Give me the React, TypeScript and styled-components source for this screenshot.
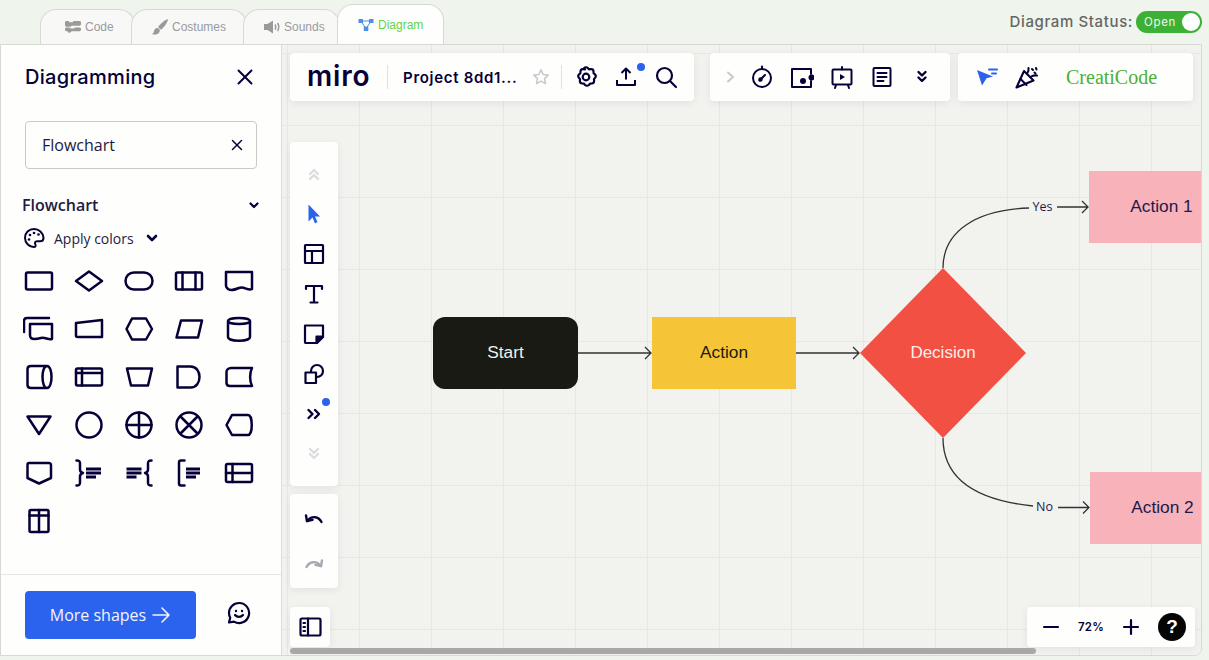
import React from "react";
import styled, { createGlobalStyle } from "styled-components";
import { X } from "lucide-react";

const INK = "#050038";
const BLUE = "#2b62ee";

const Global = createGlobalStyle`
  html, body { margin: 0; padding: 0; width: 1209px; height: 660px; overflow: hidden; background: #eff5ec; }
  * { box-sizing: border-box; }
`;
const Page = styled.div`
  width: 1209px; height: 660px; display: flex; flex-direction: column; background: #eff5ec;
  font-family: "Open Sans", "Noto Sans", sans-serif; color: ${INK};
`;
const TopRow = styled.div`display: flex; align-items: flex-end; height: 44px; padding-left: 40px; flex: none;`;
const Tab = styled.div<{ $active?: boolean; $pl: number; $width: number }>`
  width: ${p => p.$width}px; height: ${p => (p.$active ? 40 : 35)}px;
  margin-left: ${p => (p.$active ? -3 : -4)}px;
  &:first-child { margin-left: 0; }
  padding-left: ${p => p.$pl}px; display: flex; align-items: center; gap: 4px;
  padding-top: ${p => (p.$active ? 1 : 0)}px;
  background: ${p => (p.$active ? "#fefefd" : "#f8f9f6")}; border: 1px solid #d7d9d4; border-bottom: none;
  border-radius: 16px 16px 0 0;
  font: 12px "Liberation Sans", Arial, sans-serif; color: ${p => (p.$active ? "#5fd544" : "#9a9aa0")};
`;
const StatusWrap = styled.div`margin-left: auto; align-self: flex-start; margin-top: 11px; padding-right: 7px; display: flex; align-items: center; gap: 3px;`;
const StatusLabel = styled.span`font: 500 15px Inter, sans-serif; letter-spacing: .62px; color: #666; line-height: 22px;`;
const Toggle = styled.div`
  width: 66px; height: 22px; border-radius: 11px; background: #3db135; color: #eef8ec; position: relative;
  font: 400 11.5px Inter, sans-serif; letter-spacing: .65px; line-height: 22px; padding-left: 8px;
`;
const Knob = styled.span`position: absolute; right: 2px; top: 2px; width: 18px; height: 18px; border-radius: 50%; background: #fff;`;

const Main = styled.div`
  display: flex; width: 1202px; height: 612px; flex: none; border: 1px solid #d7d9d4; border-radius: 0 0 8px 0; overflow: hidden;
`;
const Sidebar = styled.aside`width: 281px; flex: none; background: #fefefc; display: flex; flex-direction: column; border-right: 1px solid #dcdcd8;`;
const SideHead = styled.div`height: 64px; flex: none; display: flex; align-items: center; justify-content: space-between; padding: 0 23px 0 24px;`;
const SideTitle = styled.h1`margin: 0; font: 500 20px Inter, sans-serif; letter-spacing: .3px; color: ${INK};`;
const SearchBox = styled.div`
  margin: 12px 0 0 24px; width: 232px; height: 48px; flex: none; border: 1px solid #c9c9cc; border-radius: 4px;
  display: flex; align-items: center; justify-content: space-between; padding: 0 10px 0 16px; font-size: 16px; color: #1a1a40;
`;
const SectionRow = styled.div`
  margin: 24px 22px 0 21px; height: 24px; flex: none; display: flex; align-items: center; justify-content: space-between;
  font-weight: 600; font-size: 16px; color: #1f1b44;
`;
const ApplyRow = styled.div`margin: 9px 0 0 22px; height: 24px; flex: none; display: flex; align-items: center; font-size: 14px; color: #1f1b44;`;
const ApplyText = styled.span`margin: 0 11px 0 9px;`;
const ShapeGrid = styled.div`margin: 7px 0 0 13px; display: grid; grid-template-columns: repeat(5, 50px); grid-auto-rows: 48px; flex: none;`;
const ShapeCell = styled.div`display: flex; align-items: center; justify-content: center;`;
const SideFoot = styled.div`
  margin-top: auto; height: 81px; flex: none; border-top: 1px solid #e6e7e3; display: flex; align-items: center; padding-left: 24px;
`;
const MoreBtn = styled.div`
  width: 171px; height: 48px; background: ${BLUE}; color: #f2f5ff; border-radius: 4px; font-size: 16px;
  display: flex; align-items: center; justify-content: center; gap: 5px;
`;
const Smile = styled.div`margin: -4px 0 0 31px; display: flex;`;

const Canvas = styled.main`
  position: relative; flex: 1; overflow: hidden; background-color: #f2f3ef;
  background-image: linear-gradient(#e7e8e4 1px, transparent 1px), linear-gradient(90deg, #e7e8e4 1px, transparent 1px);
  background-size: 72px 72px; background-position: 5px 8px;
`;
const Wires = styled.svg`position: absolute; left: 0; top: 0; width: 920px; height: 611px;`;
const Node = styled.div<{ $x: number; $y: number; $w: number; $bg: string; $fg: string; $r?: number }>`
  position: absolute; left: ${p => p.$x - 282}px; top: ${p => p.$y - 45}px; width: ${p => p.$w}px; height: 72px;
  background: ${p => p.$bg}; color: ${p => p.$fg}; border-radius: ${p => p.$r ?? 0}px;
  display: flex; align-items: center; justify-content: center; font: 17.3px "Liberation Sans", Arial, sans-serif; padding-bottom: 1px;
`;
const DecisionText = styled.div`
  position: absolute; left: ${860 - 282}px; top: ${268 - 45}px; width: 166px; height: 170px; display: flex; align-items: center; justify-content: center;
  font: 17px "Liberation Sans", Arial, sans-serif; color: #fbeeea;
`;
const EdgeLabel = styled.span<{ $x: number; $y: number }>`
  position: absolute; left: ${p => p.$x - 282}px; top: ${p => p.$y - 45}px; transform: translate(-50%, -50%);
  font-size: 12.5px; color: #1d1a4a; line-height: 16px;
`;
const TopBars = styled.div`position: absolute; left: 8px; top: 8px; display: flex; gap: 16px;`;
const Panel = styled.div`background: #fefefc; border-radius: 4px; box-shadow: 0 2px 8px rgba(5, 0, 56, .07);`;
const BarPanel = styled(Panel)<{ $w: number; $ml?: number; $pl: number }>`
  width: ${p => p.$w}px; height: 48px; display: flex; align-items: center; padding-left: ${p => p.$pl}px; margin-left: ${p => p.$ml ?? 0}px;
`;
const Logo = styled.span`width: 62px; font: 600 28px Inter, sans-serif; letter-spacing: .8px; color: ${INK}; line-height: 48px; padding-bottom: 3px;`;
const Divider = styled.span<{ $ml: number }>`width: 1px; height: 24px; background: #e1e0e7; margin-left: ${p => p.$ml}px; flex: none;`;
const ProjectName = styled.span`width: 114px; margin-left: 15px; font: 600 15px Inter, sans-serif; letter-spacing: .7px; color: ${INK}; white-space: nowrap; flex: none;`;
const StarSlot = styled.span`width: 24px; margin-left: 12px; display: flex; justify-content: center; flex: none;`;
const Btn = styled.div<{ $w?: number; $h?: number; $ml?: number; $mr?: number }>`
  position: relative; width: ${p => p.$w ?? 40}px; height: ${p => p.$h ?? 40}px; margin-left: ${p => p.$ml ?? 0}px; margin-right: ${p => p.$mr ?? 0}px; flex: none;
  display: flex; align-items: center; justify-content: center;
`;
const Dot = styled.span<{ $x: number; $y: number }>`position: absolute; left: ${p => p.$x}px; top: ${p => p.$y}px; width: 8px; height: 8px; border-radius: 50%; background: ${BLUE};`;
const Brand = styled.span`margin-left: 19px; font: 20px "Liberation Serif", "Times New Roman", serif; color: #4cb035;`;
const LeftColumn = styled.div`position: absolute; left: 8px; top: 97px; display: flex; flex-direction: column; gap: 8px; width: 48px; align-items: flex-start;`;
const ToolPanel = styled(Panel)`width: 48px; padding: 14px 4px; display: flex; flex-direction: column;`;
const UndoPanel = styled(Panel)`width: 48px; padding: 2px 4px 2px; display: flex; flex-direction: column; height: 94px;`;
const PagesPanel = styled(Panel)`width: 40px; height: 40px; margin-top: 11px; display: flex; align-items: center; justify-content: center;`;
const ZoomPanel = styled(Panel)`position: absolute; left: ${1027 - 282}px; top: ${607 - 45}px; width: 168px; height: 40px; display: flex; align-items: center; padding-left: 4px;`;
const ZoomValue = styled.span`width: 40px; text-align: center; font: 600 11.5px Inter, sans-serif; letter-spacing: .2px; color: ${INK};`;
const Help = styled.div`
  width: 28px; height: 28px; border-radius: 50%; background: #050505; color: #fff; margin-left: 7px;
  display: flex; align-items: center; justify-content: center; font: 700 19px "Liberation Sans", Arial, sans-serif;
`;
const Scrollbar = styled.div`position: absolute; left: 8px; top: ${648 - 45}px; width: 746px; height: 6px; border-radius: 3px; background: #a8a9a6;`;

type IP = { size?: number; children: React.ReactNode; color?: string; w?: number };
const I = ({ size = 24, children, color = INK, w = 2 }: IP) => (
  <svg width={size} height={size} viewBox={`0 0 ${size} ${size}`} fill="none" stroke={color} strokeWidth={w} strokeLinecap="round" strokeLinejoin="round">{children}</svg>
);
const S = ({ children }: { children: React.ReactNode }) => <I size={32} w={2.5}>{children}</I>;
const Chevs = ({ up, color }: { up?: boolean; color: string }) => (
  <I color={color} w={2.4}>
    <path d={up ? "M8 11l4-4 4 4M8 16l4-4 4 4" : "M8 8l4 4 4-4M8 13l4 4 4-4"} />
  </I>
);

const shapes: React.ReactNode[] = [
  <S><rect x="3" y="7.500" width="26" height="17" rx="1.500" /></S>,
  <S><path d="M3 16 16 6.500 29 16 16 25.500Z" /></S>,
  <S><rect x="2.500" y="7.500" width="27" height="17" rx="8.500" /></S>,
  <S><rect x="3" y="7.500" width="26" height="17" rx="1.500" /><path d="M9.500 7.500v17M22.500 7.500v17" /></S>,
  <S><path d="M3 7h26v17c-4 2-8-3-13-1s-8 3-11 1c-1-1-2-2-2-3Z" /></S>,
  <S><path d="M7 11h22v15c-4 1-7-2-11-1s-8 2-10 0c-1-1-1-2-1-3ZM1 19V8c0-2 1-3 3-3h22" /></S>,
  <S><path d="M3 10l26-3v17H4.500A1.500 1.500 0 0 1 3 22.500Z" /></S>,
  <S><path d="M9 5.500h14L29 16 23 26.500H9L3.500 16Z" /></S>,
  <S><path d="M8 7.500h21L25 24.500H3.500Z" /></S>,
  <S><path d="M5 8v16c0 5 22 5 22 0V8c0-4-22-4-22 0ZM5 8c0 4 22 4 22 0" /></S>,
  <S><path d="M8 5h16c6 0 6 22 0 22H8c-2 0-3.500-1-3.500-3V8c0-2 1.500-3 3.500-3ZM24 5c-6 0-6 22 0 22" /></S>,
  <S><rect x="3" y="7.500" width="26" height="17" rx="1.500" /><path d="M3 12h26M9 7.500v17" /></S>,
  <S><path d="M4 7.500h25L25 24.500H8Z" /></S>,
  <S><path d="M4.500 5.500h13c12 0 12 21 0 21h-13Z" /></S>,
  <S><path d="M8 7h21c-2.500 5-2.500 13 0 18H7c-2 0-3.500-1-3.500-3V11c0-2 2-4 4.500-4Z" /></S>,
  <S><path d="M4.500 7.500h23L16 25Z" /></S>,
  <S><circle cx="16" cy="16" r="12.500" /></S>,
  <S><circle cx="16" cy="16" r="12.500" /><path d="M16 3.500v25M3.500 16h25" /></S>,
  <S><circle cx="16" cy="16" r="12.500" /><path d="M7.500 7.500l17 17M24.500 7.500l-17 17" /></S>,
  <S><path d="M9 6h16c5 0 5 20 0 20H9L3.500 16Z" /></S>,
  <S><path d="M6 6h20c1 0 2 1 2 2v13L16 26.500 4.500 21V8c0-1 .500-2 1.500-2Z" /></S>,
  <S><path d="M3.500 3.500c3 0 3.500.500 3.500 3v6c0 2 1 3 3 3.500-2 .500-3 1.500-3 3.500v6c0 2.500-.500 3-3.500 3" /><path d="M13 12h15M13 16h15M13 20h10" strokeWidth="2.800" strokeLinecap="butt" /></S>,
  <S><path d="M28.500 3.500c-3 0-3.500.500-3.500 3v6c0 2-1 3-3 3.500 2 .500 3 1.500 3 3.500v6c0 2.500.500 3 3.500 3" /><path d="M3.500 12h15M3.500 16h15M3.500 20h10" strokeWidth="2.800" strokeLinecap="butt" /></S>,
  <S><path d="M11.500 3.500H8c-1.500 0-2 .500-2 2v21c0 1.500.500 2 2 2h3.500" /><path d="M13 12h14M13 16h14M13 20h10" strokeWidth="2.800" strokeLinecap="butt" /></S>,
  <S><rect x="3" y="7" width="26" height="18" rx="1.500" /><path d="M3 16h26M9.500 7v18" /></S>,
  <S><rect x="6.500" y="5" width="19" height="22" rx="1.500" /><path d="M6.500 10.500h19M16 5v22" /></S>,
];

export default function App() {
  return (
    <Page>
      <Global />
      <TopRow>
        <Tab $pl={24} $width={95}>
          <svg width="16" height="12" viewBox="0 0 16 12" fill="#9a9a9a"><path d="M0 1 1 0h2.500l1 1.200h3L8.500 0H15l1 1v2.500l-1 1.200H6.500l-1 1H1L0 4.500ZM0 7.500l1-1h3.500l1 1h3.500l1-1H15l1 1V9l-1 1.200H6.500l-1.500 1.500H3.500L2.500 10.200H1L0 9Z" /></svg>
          Code
        </Tab>
        <Tab $pl={20} $width={116}>
          <svg width="16" height="16" viewBox="0 0 16 16" fill="#9a9a9a"><path d="M15.800.3c.6 2-3.500 8-6.800 10.500L6 8C8.500 4.800 13.500.2 15.800.3ZM5 9c1.800 0 3 1.300 2.800 2.900C7.400 14.800 2.800 16.500 0 15c2-1 1.600-2.300 2.200-3.600C2.800 10 3.700 9 5 9Z" /></svg>
          Costumes
        </Tab>
        <Tab $pl={20} $width={97}>
          <svg width="16" height="14" viewBox="0 0 16 14" fill="#9a9a9a"><path d="M0 4h3.500L9 .500v13L3.500 10H0Z" /><path d="M11 4.500c1 1.200 1 3.800 0 5M13.500 3c1.600 2.200 1.600 5.800 0 8" stroke="#9a9a9a" strokeWidth="1.600" fill="none" /></svg>
          Sounds
        </Tab>
        <Tab $active $pl={20} $width={107}>
          <svg width="16" height="14" viewBox="0 0 16 14"><path d="M3 3h10L8 11Z" fill="none" stroke="#4b8fe8" strokeWidth="1" /><rect x="0.500" y="1" width="4.500" height="4" fill="#4b8fe8" /><rect x="11" y="1" width="4.500" height="4" fill="#4b8fe8" /><rect x="5.800" y="8.500" width="4.500" height="4.500" fill="#4b8fe8" /></svg>
          Diagram
        </Tab>
        <StatusWrap>
          <StatusLabel>Diagram Status:</StatusLabel>
          <Toggle>Open<Knob /></Toggle>
        </StatusWrap>
      </TopRow>
      <Main>
        <Sidebar>
          <SideHead>
            <SideTitle>Diagramming</SideTitle>
            <X size={26} strokeWidth={1.8} color={INK} />
          </SideHead>
          <SearchBox>Flowchart<X size={18} strokeWidth={2} color={INK} /></SearchBox>
          <SectionRow>
            Flowchart
            <I size={10} w={2.200}><path d="M1.500 3.500 5 7l3.500-3.500" /></I>
          </SectionRow>
          <ApplyRow>
            <I size={22} w={2}>
              <path d="M11 2C5.800 2 2 5.800 2 10.800c0 5 4 9.200 8.600 9.200 2.200 0 2.400-1.500 1.700-2.800-.8-1.400-.2-3 1.700-3h3.200c2 0 3.300-1.300 3.300-3.500C20 5.800 16 2 11 2Z" />
              <circle cx="7" cy="8" r="1.300" fill={INK} stroke="none" />
              <circle cx="11" cy="6" r="1.300" fill={INK} stroke="none" />
              <circle cx="15.500" cy="7.500" r="1.300" fill={INK} stroke="none" />
              <circle cx="6" cy="12.500" r="1.300" fill={INK} stroke="none" />
            </I>
            <ApplyText>Apply colors</ApplyText>
            <I size={14} w={2.600}><path d="M3 5l4 4 4-4" /></I>
          </ApplyRow>
          <ShapeGrid>
            {shapes.map((s, i) => <ShapeCell key={i}>{s}</ShapeCell>)}
          </ShapeGrid>
          <SideFoot>
            <MoreBtn>
              More shapes
              <I size={20} color="#f2f5ff" w={1.600}><path d="M2 10h16M11 3l7 7-7 7" /></I>
            </MoreBtn>
            <Smile>
              <I w={2.200}>
                <path d="M12 2a10 10 0 0 0-10 10c0 2 .5 3.500 1.200 4.800L2 21.500l5-.9A10 10 0 1 0 12 2Z" />
                <circle cx="9" cy="10" r="1.200" fill={INK} stroke="none" />
                <circle cx="15" cy="10" r="1.200" fill={INK} stroke="none" />
                <path d="M8 14c2 2.500 6 2.500 8 0" />
              </I>
            </Smile>
          </SideFoot>
        </Sidebar>
        <Canvas>
          <Wires viewBox="282 45 920 611" fill="none" stroke="#333" strokeWidth="1.300">
            <path d="M578 353H651M645 347l6 6-6 6" />
            <path d="M796 353H859M853 347l6 6-6 6" />
            <path d="M943 268C943 232 975 210 1029 208" />
            <path d="M1057 207H1088M1082 201l6 6-6 6" />
            <path d="M943 438C943 478 975 500 1033 506" />
            <path d="M1058 507.500H1089M1083 501.500l6 6-6 6" />
            <path d="M943 268L1026 353 943 438 860 353Z" fill="#f25042" stroke="none" />
          </Wires>
          <Node $x={433} $y={317} $w={145} $bg="#1a1a14" $fg="#f0f0ec" $r={12}>Start</Node>
          <Node $x={652} $y={317} $w={144} $bg="#f5c537" $fg="#1f1a10">Action</Node>
          <DecisionText>Decision</DecisionText>
          <Node $x={1089} $y={171} $w={145} $bg="#f7b2ba" $fg="#1d1a4a">Action 1</Node>
          <Node $x={1090} $y={472} $w={145} $bg="#f7b2ba" $fg="#1d1a4a">Action 2</Node>
          <EdgeLabel $x={1042.500} $y={207}>Yes</EdgeLabel>
          <EdgeLabel $x={1044.500} $y={507}>No</EdgeLabel>

          <TopBars>
            <BarPanel $w={404} $pl={17}>
              <Logo>miro</Logo>
              <Divider $ml={18} />
              <ProjectName>Project 8dd1...</ProjectName>
              <StarSlot>
                <I size={18} color="#c9c9d2" w={1.600}><path d="M9 1.800l2.200 4.700 5 .6-3.700 3.500 1 5L9 13.100l-4.500 2.500 1-5L1.800 7.100l5-.6Z" /></I>
              </StarSlot>
              <Divider $ml={8} />
              <Btn $ml={4}>
                <I w={2.200}>
                  <path d="M10 3.200c1-1 3-1 4 0l1 1.200 1.800-.2c1.400-.1 2.600 1 2.700 2.300l.1 1.700 1.300 1.100c1 1 1 2.500.2 3.500l-1.100 1.300.1 1.800c0 1.400-1 2.400-2.300 2.600l-1.800.2-1.100 1.300c-1 1-2.800 1-3.800 0l-1.100-1.300-1.800-.2c-1.400-.2-2.300-1.200-2.300-2.600l.1-1.800-1.100-1.300c-.8-1-.8-2.500.2-3.500l1.300-1.100.1-1.700c.1-1.300 1.300-2.400 2.700-2.300l1.800.2Z" />
                  <circle cx="12" cy="12" r="3.300" />
                </I>
              </Btn>
              <Btn>
                <I w={2}><path d="M12 14.500V3.500M7.500 8 12 3.500 16.500 8M3 15v5h18v-5" strokeLinecap="butt" /></I>
                <Dot $x={31} $y={6} />
              </Btn>
              <Btn>
                <I w={2.200}><circle cx="10.500" cy="10.500" r="7.500" /><path d="M16 16l6 6" /></I>
              </Btn>
            </BarPanel>
            <BarPanel $w={240} $pl={10}>
              <Btn $w={20} $mr={2}>
                <I size={14} color="#c8c8cf" w={2}><path d="M5 2.500 10 7l-5 4.500" /></I>
              </Btn>
              <Btn>
                <I w={2}>
                  <circle cx="12" cy="13" r="9" />
                  <path d="M12 1.500V4" />
                  <path d="M9.500 15.500 15 10" />
                  <circle cx="10.500" cy="14.500" r="1.200" fill={INK} />
                </I>
              </Btn>
              <Btn>
                <I w={2}>
                  <path d="M21 9V4H2v18h19v-6" />
                  <circle cx="21.500" cy="12.500" r="3" fill={INK} stroke="none" />
                  <circle cx="13" cy="16" r="3" fill={INK} stroke="none" />
                </I>
              </Btn>
              <Btn>
                <I w={2}>
                  <rect x="2.500" y="4.500" width="19" height="15" rx="1" />
                  <path d="M12 2v2.500M6 20l-1 3M18 20l1 3" />
                  <path d="M10 9l5 3-5 3Z" fill={INK} stroke="none" />
                </I>
              </Btn>
              <Btn>
                <I w={2}>
                  <rect x="3.500" y="3" width="17" height="18" rx="1" />
                  <path d="M7.500 8h9M7.500 12h9M7.500 16h6" />
                </I>
              </Btn>
              <Btn>
                <I w={2.400}><path d="M8.500 7l3.500 3.500L15.500 7M8.500 12.500l3.500 3.500 3.500-3.500" /></I>
              </Btn>
            </BarPanel>
            <BarPanel $w={235} $pl={9} $ml={-8}>
              <Btn>
                <I color={BLUE} w={2}>
                  <path d="M2 5l16 6.500-6.500 1.800L7 20.500Z" fill={BLUE} stroke="none" />
                  <path d="M14 4.500h8M17 8.500h4" />
                </I>
              </Btn>
              <Btn>
                <I w={2.100}>
                  <path d="M1.500 22.500 9 6l9.500 9.500Z" />
                  <path d="M5.500 14l6 6M12 8.500c1.500-2 2-3 1.500-5.500M15.500 12c2-1.500 3.500-2 6.500-1.500" />
                  <path d="M17 4l1 1M21 3l.5 1.500M19.500 7.500l1 1" />
                </I>
              </Btn>
              <Brand>CreatiCode</Brand>
            </BarPanel>
          </TopBars>

          <LeftColumn>
            <ToolPanel>
              <Btn $h={38}><Chevs up color="#dcdde2" /></Btn>
              <Btn>
                <I color={BLUE}><path d="M6.500 2.500 18 14.500h-5l2.500 5.500-2.500 1.500-2.500-6-4 4Z" fill={BLUE} stroke="none" /></I>
              </Btn>
              <Btn>
                <I w={2.200}><rect x="3" y="3" width="18" height="18" rx=".5" /><path d="M3 9h18M10 9v12" /></I>
              </Btn>
              <Btn>
                <I w={2.200}><path d="M4 7V4h16v3M12 4v16M8.500 20.500h7" /></I>
              </Btn>
              <Btn>
                <I w={2.200}>
                  <path d="M3 3.500h18V15l-6 6H3.500l-.5-.5Z" />
                  <path d="M21 14.500 14.500 21v-6.500Z" fill={INK} stroke={INK} />
                </I>
              </Btn>
              <Btn>
                <I w={2.200}><rect x="3.500" y="10.500" width="10.500" height="10.500" /><path d="M9 10V9a6 6 0 1 1 6 6h-1" /></I>
              </Btn>
              <Btn>
                <I w={2.400}><path d="M6.500 8l4 4-4 4M13 8l4 4-4 4" /></I>
                <Dot $x={28} $y={4} />
              </Btn>
              <Btn $h={38}><Chevs color="#dcdde2" /></Btn>
            </ToolPanel>
            <UndoPanel>
              <Btn $h={45}>
                <I w={2.400}><path d="M4 8.500 5 14l5.500-1.200" /><path d="M19.500 15c-3-6-10-6.500-14.500-1" /></I>
              </Btn>
              <Btn $h={45}>
                <I color="#a8a8b4" w={2.400}><path d="M20 8.500 19 14l-5.500-1.200" /><path d="M4.500 15c3-6 10-6.500 14.500-1" /></I>
              </Btn>
            </UndoPanel>
            <PagesPanel>
              <I w={2.200}>
                <rect x="2.500" y="3.500" width="20" height="17" rx="1.500" />
                <path d="M10 3.500v17M5.500 8H7M5.500 12H7M5.500 16H7" />
              </I>
            </PagesPanel>
          </LeftColumn>

          <ZoomPanel>
            <Btn><I w={2.200}><path d="M5 12h14" /></I></Btn>
            <ZoomValue>72%</ZoomValue>
            <Btn><I w={2.200}><path d="M12 5v14M5 12h14" /></I></Btn>
            <Help>?</Help>
          </ZoomPanel>
          <Scrollbar />
        </Canvas>
      </Main>
    </Page>
  );
}
